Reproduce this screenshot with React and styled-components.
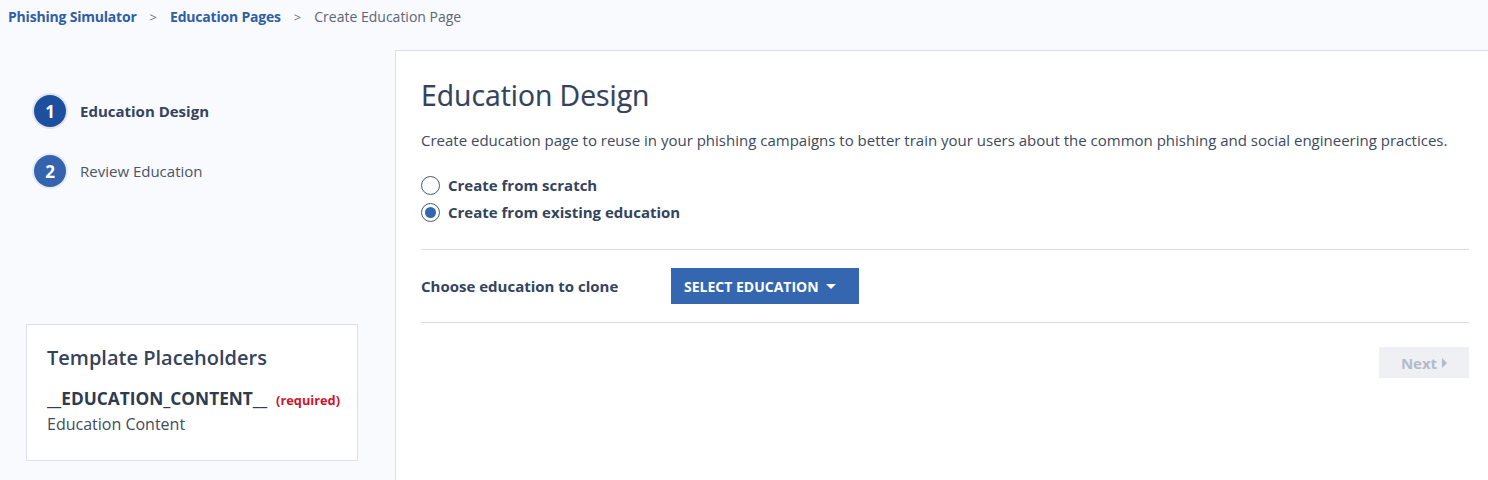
import React, { useState } from "react";
import styled, { createGlobalStyle } from "styled-components";

const Global = createGlobalStyle`
  html, body { margin: 0; padding: 0; background: #f9fafd; }
  body { font-family: "Open Sans", "Noto Sans", sans-serif; color: #34435e; }
  * { box-sizing: border-box; }
`;

const Page = styled.div`
  display: flex;
  flex-direction: column;
  min-height: 480px;
`;

const Breadcrumb = styled.nav`
  height: 50px;
  display: flex;
  align-items: flex-start;
  padding: 6px 0 0 8px;
  font-size: 14px;
  line-height: 22px;
`;

const Crumb = styled.a`
  color: ${(p) => (p.$current ? "#5b6575" : "#2f5ea8")};
  font-weight: ${(p) => (p.$current ? 400 : 700)};
  letter-spacing: ${(p) => (p.$current ? "0" : "-0.2px")};
  text-decoration: none;
`;

const Sep = styled.span`
  color: #6b7381;
  margin: 0 13px;
  font-size: 13px;
`;

const Body = styled.div`
  display: flex;
  flex: 1;
`;

const Sidebar = styled.aside`
  width: 395px;
  flex: none;
  display: flex;
  flex-direction: column;
  padding: 45px 37px 19px 26px;
`;

const Steps = styled.ol`
  list-style: none;
  margin: 0;
  padding: 0 0 0 8px;
  display: flex;
  flex-direction: column;
  gap: 28px;
`;

const Step = styled.li`
  display: flex;
  align-items: center;
  gap: 14px;
  height: 32px;
  font-size: 15px;
  font-weight: ${(p) => (p.$active ? 700 : 400)};
  color: ${(p) => (p.$active ? "#34435e" : "#4a5567")};
`;

const StepNum = styled.span`
  width: 32px;
  height: 32px;
  border-radius: 50%;
  background: ${(p) => (p.$active ? "#1d4f9f" : "#3464ae")};
  box-shadow: 0 0 0 2px ${(p) => (p.$active ? "#dfe5f0" : "#e6ebf3")};
  color: #fff;
  font-weight: 700;
  font-size: 17px;
  display: flex;
  align-items: center;
  justify-content: center;
`;

const Card = styled.section`
  margin-top: auto;
  background: #fff;
  border: 1px solid #dde1ea;
  padding: 19px 20px 20px 20px;
  height: 137px;
`;

const CardTitle = styled.h3`
  margin: 0;
  font-size: 20px;
  font-weight: 600;
  line-height: 28px;
  color: #34435e;
`;

const PlaceholderName = styled.div`
  margin-top: 15px;
  display: flex;
  align-items: baseline;
  gap: 9px;
  font-size: 17.3px;
  font-weight: 700;
  line-height: 24px;
  color: #2d3b52;
`;

const Required = styled.span`
  color: #d0142b;
  font-size: 12.8px;
  font-weight: 700;
`;

const PlaceholderDesc = styled.div`
  font-size: 16px;
  line-height: 24px;
  color: #3f4b5f;
  margin-top: 0;
`;

const Main = styled.main`
  flex: 1;
  background: #fff;
  border-left: 1px solid #dcdfe8;
  border-top: 1px solid #dcdfe8;
  padding: 26px 19px 30px 25px;
`;

const Heading = styled.h1`
  margin: 0;
  font-size: 28.3px;
  font-weight: 400;
  line-height: 36px;
  color: #33435e;
  -webkit-text-stroke: 0.2px #33435e;
`;

const Desc = styled.p`
  margin: 17px 0 0;
  font-size: 15px;
  line-height: 20px;
  color: #3d4a5e;
`;

const Radios = styled.div`
  margin-top: 24px;
  display: flex;
  flex-direction: column;
  gap: 5px;
`;

const RadioRow = styled.label`
  display: flex;
  align-items: center;
  gap: 8px;
  height: 22px;
  font-size: 15px;
  font-weight: 700;
  color: #34435e;
  cursor: pointer;
`;

const RadioDot = styled.span`
  width: 19px;
  height: 19px;
  border-radius: 50%;
  border: 1.5px solid #4b5a73;
  display: flex;
  align-items: center;
  justify-content: center;
  &::after {
    content: "";
    width: 11px;
    height: 11px;
    border-radius: 50%;
    background: ${(p) => (p.$checked ? "#3566b0" : "transparent")};
  }
`;

const Divider = styled.hr`
  margin: 0;
  border: 0;
  border-top: 1px solid #dadde3;
`;

const FirstDivider = styled(Divider)`
  margin-top: 26px;
`;

const CloneRow = styled.div`
  display: grid;
  grid-template-columns: 250px auto 1fr;
  align-items: center;
  padding: 18px 0;
`;

const CloneLabel = styled.span`
  font-size: 15px;
  font-weight: 700;
  color: #34435e;
`;

const SelectButton = styled.button`
  height: 36px;
  width: 188px;
  border: 0;
  padding: 0 0 0 13px;
  background: #3566b0;
  color: #fff;
  font-family: inherit;
  font-size: 14px;
  font-weight: 700;
  display: flex;
  align-items: center;
  justify-content: flex-start;
  gap: 7px;
  cursor: pointer;
`;

const CaretDown = styled.span`
  width: 0;
  height: 0;
  border-left: 5px solid transparent;
  border-right: 5px solid transparent;
  border-top: 5px solid #fff;
`;

const Footer = styled.div`
  display: flex;
  justify-content: flex-end;
  margin-top: 24px;
`;

const NextButton = styled.button`
  width: 90px;
  height: 31px;
  border: 0;
  background: #eef0f4;
  color: #b3bbc8;
  font-family: inherit;
  font-size: 15px;
  font-weight: 700;
  display: flex;
  align-items: center;
  justify-content: center;
  gap: 5px;
`;

const CaretRight = styled.span`
  width: 0;
  height: 0;
  border-top: 5px solid transparent;
  border-bottom: 5px solid transparent;
  border-left: 5px solid #b3bbc8;
`;

export default function App() {
  const [mode, setMode] = useState("existing");
  return (
    <Page>
      <Global />
      <Breadcrumb>
        <Crumb href="#">Phishing Simulator</Crumb>
        <Sep>&gt;</Sep>
        <Crumb href="#">Education Pages</Crumb>
        <Sep>&gt;</Sep>
        <Crumb $current>Create Education Page</Crumb>
      </Breadcrumb>
      <Body>
        <Sidebar>
          <Steps>
            <Step $active>
              <StepNum $active>1</StepNum>
              Education Design
            </Step>
            <Step>
              <StepNum>2</StepNum>
              Review Education
            </Step>
          </Steps>
          <Card>
            <CardTitle>Template Placeholders</CardTitle>
            <PlaceholderName>
              __EDUCATION_CONTENT__ <Required>(required)</Required>
            </PlaceholderName>
            <PlaceholderDesc>Education Content</PlaceholderDesc>
          </Card>
        </Sidebar>
        <Main>
          <Heading>Education Design</Heading>
          <Desc>
            Create education page to reuse in your phishing campaigns to better train your users about the common phishing and social engineering practices.
          </Desc>
          <Radios>
            <RadioRow onClick={() => setMode("scratch")}>
              <RadioDot $checked={mode === "scratch"} />
              Create from scratch
            </RadioRow>
            <RadioRow onClick={() => setMode("existing")}>
              <RadioDot $checked={mode === "existing"} />
              Create from existing education
            </RadioRow>
          </Radios>
          <FirstDivider />
          <CloneRow>
            <CloneLabel>Choose education to clone</CloneLabel>
            <SelectButton>
              SELECT EDUCATION <CaretDown />
            </SelectButton>
          </CloneRow>
          <Divider />
          <Footer>
            <NextButton disabled>
              Next <CaretRight />
            </NextButton>
          </Footer>
        </Main>
      </Body>
    </Page>
  );
}
